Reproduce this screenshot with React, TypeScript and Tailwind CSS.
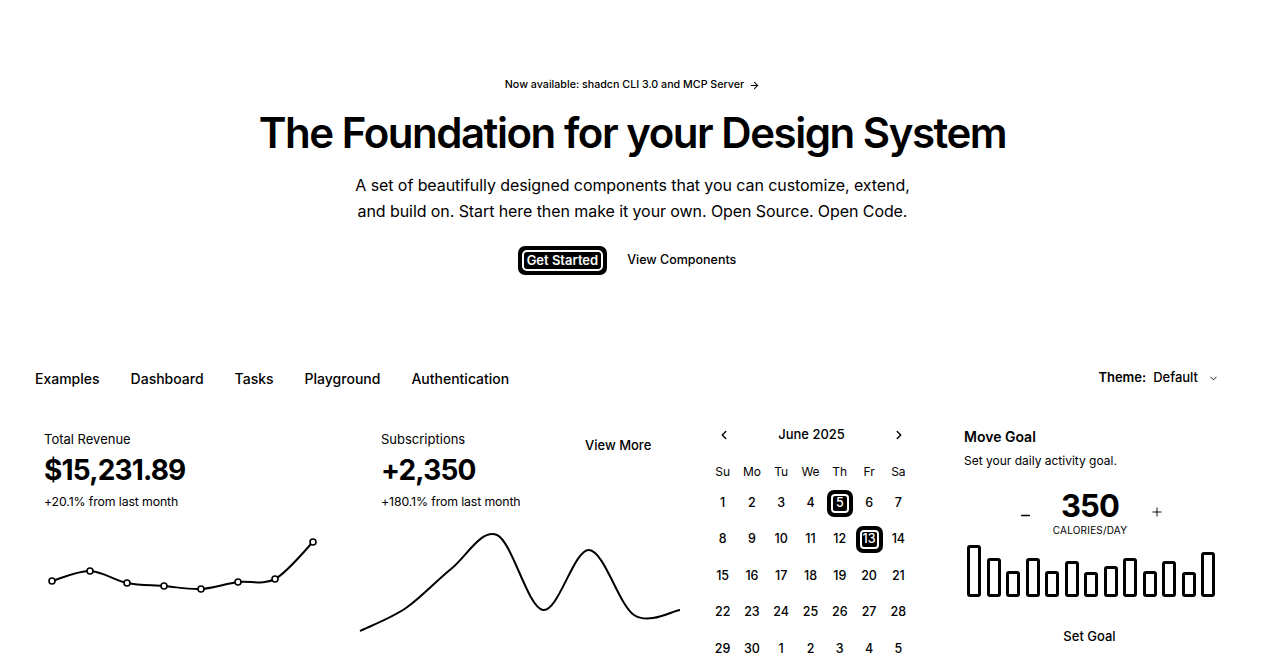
import { ChevronDown, ChevronLeft, ChevronRight, Minus, Plus, ArrowRight } from 'lucide-react'

type Pt = [number, number]

const smoothPath = (pts: Pt[]) => {
    let d = `M${pts[0][0]},${pts[0][1]}`
    for (let i = 0; i < pts.length - 1; i++) {
        const p0 = pts[i - 1] || pts[i]
        const p1 = pts[i]
        const p2 = pts[i + 1]
        const p3 = pts[i + 2] || p2
        const c1x = p1[0] + (p2[0] - p0[0]) / 6
        const c1y = p1[1] + (p2[1] - p0[1]) / 6
        const c2x = p2[0] - (p3[0] - p1[0]) / 6
        const c2y = p2[1] - (p3[1] - p1[1]) / 6
        d += ` C${c1x},${c1y} ${c2x},${c2y} ${p2[0]},${p2[1]}`
    }
    return d
}

const revenuePts: Pt[] = [
    [8, 50], [46, 40], [83, 52], [120, 55], [157, 58], [194, 51], [231, 48], [269, 11],
]
const subsPts: Pt[] = [
    [5, 105], [51, 82], [96, 43], [142, 9], [188, 84], [234, 24], [279, 89], [325, 84],
]

const goals = [400, 300, 200, 300, 200, 278, 189, 239, 300, 200, 278, 189, 349]

const weeks = [
    ['1', '2', '3', '4', '5', '6', '7'],
    ['8', '9', '10', '11', '12', '13', '14'],
    ['15', '16', '17', '18', '19', '20', '21'],
    ['22', '23', '24', '25', '26', '27', '28'],
    ['29', '30', '1', '2', '3', '4', '5'],
]

const Selected = ({ children }: { children: React.ReactNode }) => (
    <div className="rounded-[7px] bg-black p-[4px]">
        <div className="flex h-[19px] min-w-[18px] items-center justify-center rounded-[4px] border-2 border-white bg-black px-[1px] text-white">
            {children}
        </div>
    </div>
)

const App = () => {
    return (
        <div className="min-h-[670px] w-[1280px] overflow-hidden bg-white text-black" style={{ fontFamily: 'Inter, "Liberation Sans", sans-serif' }}>
            {/* hero */}
            <div className="flex flex-col items-center pr-[15px] pt-[77px]">
                <div className="flex h-4 items-center gap-[5px] text-[10.7px] font-medium leading-4">
                    Now available: shadcn CLI 3.0 and MCP Server
                    <ArrowRight size={11} strokeWidth={2.2} />
                </div>
                <h1 className="mt-[16px] text-[42px] font-semibold leading-[48px] tracking-[-0.035em]">
                    The Foundation for your Design System
                </h1>
                <p className="mt-[15px] max-w-[600px] text-center text-[16px] leading-[26px] tracking-[-0.005em]">
                    A set of beautifully designed components that you can customize, extend,
                    <br />
                    and build on. Start here then make it your own. Open Source. Open Code.
                </p>
                <div className="mt-[22px] flex items-center gap-[20px] pr-[11px]">
                    <div className="rounded-[7px] bg-black p-[4px]">
                        <div className="flex h-[21px] items-center rounded-[5px] border-2 border-white bg-black px-[3px] text-[13px] font-semibold text-white">
                            Get Started
                        </div>
                    </div>
                    <div className="text-[12.5px] font-medium">View Components</div>
                </div>
            </div>

            {/* tabs */}
            <div className="mt-[93px] flex h-5 items-center justify-between pl-[35px] pr-[61px] text-[14px] font-medium">
                <div className="flex items-center gap-[31px]">
                    <span>Examples</span>
                    <span>Dashboard</span>
                    <span>Tasks</span>
                    <span>Playground</span>
                    <span>Authentication</span>
                </div>
                <div className="flex items-center text-[13px]">
                    <span className="font-semibold">Theme:</span>
                    <span className="ml-[7px]">Default</span>
                    <ChevronDown size={11} className="ml-[10px]" />
                </div>
            </div>

            {/* cards */}
            <div className="mt-[41px] flex pl-[35px]">
                <div className="w-[337px] pl-[9px]">
                    <div className="text-[13px] leading-5">Total Revenue</div>
                    <div className="mt-[3px] text-[28px] font-bold leading-[36px] tracking-[-0.03em]">$15,231.89</div>
                    <div className="mt-[6px] text-[12.3px] leading-4 tracking-[-0.01em]">+20.1% from last month</div>
                    <svg width="290" height="70" className="mt-[21px]">
                        <path d={smoothPath(revenuePts)} fill="none" stroke="black" strokeWidth="2" />
                        {revenuePts.map(([x, y], i) => (
                            <circle key={i} cx={x} cy={y} r="3" fill="white" stroke="black" strokeWidth="1.6" />
                        ))}
                    </svg>
                </div>

                <div className="w-[338px] pl-[9px]">
                    <div className="flex items-start">
                        <div className="w-[204px] text-[13px] leading-5">Subscriptions</div>
                        <div className="mt-[6px] text-[13px] font-medium leading-5">View More</div>
                    </div>
                    <div className="-mt-[3px] text-[28px] font-bold leading-[36px] tracking-[-0.03em]">+2,350</div>
                    <div className="mt-[6px] text-[12.3px] leading-4 tracking-[-0.01em]">+180.1% from last month</div>
                    <svg width="330" height="112" className="-ml-[26px] mt-[16px]">
                        <path d={smoothPath(subsPts)} fill="none" stroke="black" strokeWidth="2" />
                    </svg>
                </div>

                {/* calendar */}
                <div className="w-[245px] -ml-[2px]">
                    <div className="-mt-[4px] flex h-5 w-[205px] items-center justify-between pl-[9px] pr-[7px] text-[13px] font-medium">
                        <ChevronLeft size={14} strokeWidth={2.4} />
                        <span>June 2025</span>
                        <ChevronRight size={14} strokeWidth={2.4} />
                    </div>
                    <div className="mt-[19px] grid w-[205px] grid-cols-7 text-center text-[12px] leading-4">
                        {['Su', 'Mo', 'Tu', 'We', 'Th', 'Fr', 'Sa'].map((d) => (
                            <span key={d}>{d}</span>
                        ))}
                    </div>
                    <div className="mt-[5px] flex w-[205px] flex-col">
                        {weeks.map((w, wi) => (
                            <div key={wi} className="grid h-[36.5px] grid-cols-7 items-center text-center text-[12.5px] font-medium">
                                {w.map((d, di) => (
                                    <div key={di} className="flex justify-center">
                                        {(wi === 0 && d === '5') || d === '13' ? <Selected>{d}</Selected> : d}
                                    </div>
                                ))}
                            </div>
                        ))}
                    </div>
                </div>

                {/* move goal */}
                <div className="w-[262px] pl-[11px]">
                    <div className="-mt-[2px] text-[14px] font-semibold leading-5">Move Goal</div>
                    <div className="mt-[6px] text-[12px] leading-4">Set your daily activity goal.</div>
                    <div className="mt-[19px] flex items-center justify-center pl-[4px]">
                        <Minus size={13} strokeWidth={3} className="mr-[21px] mt-[6px]" />
                        <div className="flex flex-col items-center">
                            <div className="text-[31px] font-bold leading-[36px] tracking-[-0.03em]">350</div>
                            <div className="text-[10px] uppercase leading-3 tracking-[0.02em]">Calories/day</div>
                        </div>
                        <Plus size={14} strokeWidth={1.6} className="ml-[23px]" />
                    </div>
                    <div className="mt-[9px] flex h-[52px] items-end gap-[5.5px] pl-[3px]">
                        {goals.map((g, i) => (
                            <div
                                key={i}
                                className="w-[14px] rounded-[3px] border-[3px] border-black bg-white"
                                style={{ height: `${(g / 400) * 52}px` }}
                            />
                        ))}
                    </div>
                    <div className="mt-[29px] text-center text-[13px] font-medium leading-5">Set Goal</div>
                </div>
            </div>
        </div>
    )
}

export default App
